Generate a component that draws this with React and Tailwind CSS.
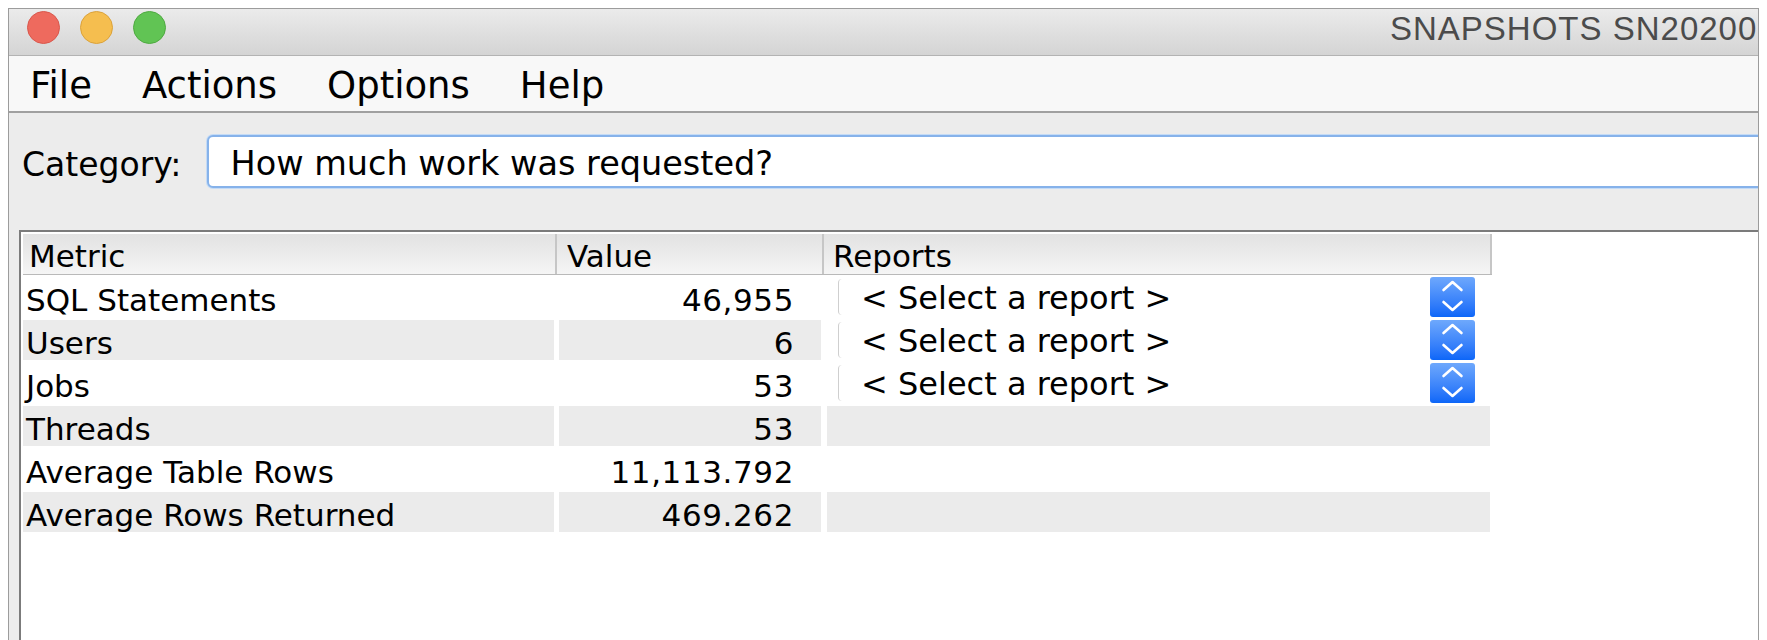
import React from "react";

const rows = [
  { metric: "SQL Statements", value: "46,955", report: true },
  { metric: "Users", value: "6", report: true },
  { metric: "Jobs", value: "53", report: true },
  { metric: "Threads", value: "53" },
  { metric: "Average Table Rows", value: "11,113.792" },
  { metric: "Average Rows Returned", value: "469.262" },
];

function Spinner() {
  return (
    <div className="h-[40px] w-[45px] shrink-0 rounded-[3px] bg-linear-to-b from-[#6ea8fc] to-[#0b66f8]">
      <svg width="45" height="40" viewBox="0 0 45 40" fill="none">
        <path d="M13.5 13 L22.5 5 L31.5 13" stroke="white" strokeWidth="2.6" strokeLinecap="round" strokeLinejoin="round" />
        <path d="M13.5 25 L22.5 33 L31.5 25" stroke="white" strokeWidth="2.6" strokeLinecap="round" strokeLinejoin="round" />
      </svg>
    </div>
  );
}

function ReportCombo() {
  return (
    <div className="ml-[11px] mr-[15px] flex h-full items-center bg-white">
      <div className="my-[2px] h-[36px] w-[4px] shrink-0 rounded-l-[4px] border-l border-[#cfcfcf]" />
      <div className="flex-1 whitespace-nowrap pl-[19px] pt-[1px] text-[32px] leading-none">
        &lt; Select a report &gt;
      </div>
      <Spinner />
    </div>
  );
}

export default function App() {
  return (
    <div className="h-[640px] w-[1767px] overflow-hidden bg-white px-[8px] pt-[8px] font-['DejaVu_Sans',sans-serif] text-black">
      <div className="flex h-full flex-col overflow-hidden border-l border-r border-t border-[#9c9c9c] bg-[#ececec]">
        {/* title bar */}
        <div className="flex h-[47px] shrink-0 items-start overflow-hidden border-b border-[#b3b3b3] bg-linear-to-b from-[#ebebeb] to-[#d4d4d4] pl-[18px] pt-[2px]">
          <div className="flex shrink-0 gap-[20px]">
            <div className="h-[33px] w-[33px] rounded-full border border-[#d9574c] bg-[#ee6a5e]" />
            <div className="h-[33px] w-[33px] rounded-full border border-[#dba23a] bg-[#f5be4f]" />
            <div className="h-[33px] w-[33px] rounded-full border border-[#4faa41] bg-[#61c454]" />
          </div>
          <div className="ml-[1224px] mt-[1px] whitespace-nowrap font-['Liberation_Sans',sans-serif] text-[33px] leading-none tracking-[1px] text-[#4b4b4b]">
            SNAPSHOTS SN20200
          </div>
        </div>

        {/* menu bar */}
        <div className="flex h-[57px] shrink-0 items-center gap-[50px] border-b-2 border-[#a0a0a0] bg-[#f8f8f8] pl-[21px] pt-[4px] text-[37px] leading-none">
          <span>File</span>
          <span>Actions</span>
          <span>Options</span>
          <span>Help</span>
        </div>

        {/* category selector */}
        <div className="mt-[22px] flex shrink-0 items-center gap-[26px] pl-[13px]">
          <span className="pt-[6px] text-[33px] leading-none">Category:</span>
          <div className="-mr-[12px] flex h-[53px] flex-1 items-center rounded-[6px] border-2 border-[#86b2ea] bg-white pl-[21px] pt-[5px] text-[33.5px] leading-none shadow-[0_0_0_1px_#c4dbf6]">
            How much work was requested?
          </div>
        </div>

        {/* metrics table */}
        <div className="ml-[10px] mt-[42px] flex-1 border-l-2 border-t-2 border-[#7b7b7b] bg-white pl-[2px] pt-[2px]">
          <div className="w-[1469px]">
            <div className="flex h-[41px] items-center border-b border-[#b9b9b9] bg-linear-to-b from-[#e2e2e2] to-[#f5f5f5] text-[31px] leading-none">
              <div className="flex h-full w-[534px] items-center border-r-2 border-[#c6c6c6] pl-[6px] pt-[4px]">Metric</div>
              <div className="flex h-full w-[267px] items-center border-r-2 border-[#c6c6c6] pl-[10px] pt-[4px]">Value</div>
              <div className="flex h-full w-[668px] items-center border-r-2 border-[#c6c6c6] pl-[9px] pt-[4px]">Reports</div>
            </div>

            {rows.map((r, i) => {
              const shade = i % 2 === 1 ? "bg-[#ebebeb]" : "bg-white";
              return (
                <div key={r.metric} className="flex h-[43px] pb-[1px] pt-[2px] text-[31px] leading-none">
                  <div className={`mr-[3px] flex w-[531px] items-center pl-[3px] pt-[6px] ${shade}`}>{r.metric}</div>
                  <div className={`ml-[2px] mr-[3px] flex w-[262px] items-center justify-end pr-[27px] pt-[6px] tracking-[0.6px] ${shade}`}>
                    {r.value}
                  </div>
                  <div className={`ml-[3px] w-[663px] ${r.report ? "bg-white" : shade}`}>
                    {r.report ? <ReportCombo /> : null}
                  </div>
                </div>
              );
            })}
          </div>
        </div>
      </div>
    </div>
  );
}
